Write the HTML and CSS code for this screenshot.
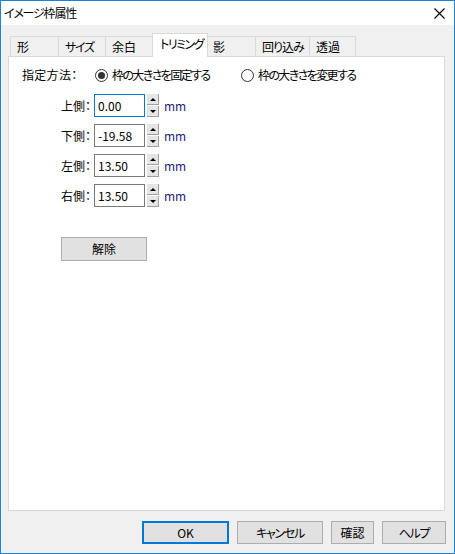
FILE: index.html
```html
<!doctype html>
<html lang="ja">
<head>
<meta charset="UTF-8">
<title>イメージ枠属性</title>
<link rel="stylesheet" href="styles.css">
</head>
<body>
<div class="window">
	<div class="titlebar">
		<span class="title">イメージ枠属性</span>
		<span class="close"><svg width="11" height="11" viewBox="0 0 11 11"><path d="M0.5 0.5L10.5 10.5M10.5 0.5L0.5 10.5" stroke="#000" stroke-width="1.1" fill="none"/></svg></span>
	</div>
	<div class="tabs">
		<div class="tab t-shape">形</div>
		<div class="tab t-size kana">サイズ</div>
		<div class="tab t-margin">余白</div>
		<div class="tab t-trim kana active">トリミング</div>
		<div class="tab t-shadow">影</div>
		<div class="tab t-wrap kana">回り込み</div>
		<div class="tab t-alpha">透過</div>
	</div>
	<div class="panel">
		<div class="method">
			<span class="method-label">指定方法：</span>
			<span class="radio first checked"><span class="dot"></span>枠の大きさを固定する</span>
			<span class="radio"><span class="dot"></span>枠の大きさを変更する</span>
		</div>
		<div class="field">
			<span class="field-label">上側：</span>
			<span class="input focus">0.00</span>
			<span class="spin"><span class="up"></span><span class="down"></span></span>
			<span class="unit">mm</span>
		</div>
		<div class="field">
			<span class="field-label">下側：</span>
			<span class="input">-19.58</span>
			<span class="spin"><span class="up"></span><span class="down"></span></span>
			<span class="unit">mm</span>
		</div>
		<div class="field">
			<span class="field-label">左側：</span>
			<span class="input">13.50</span>
			<span class="spin"><span class="up"></span><span class="down"></span></span>
			<span class="unit">mm</span>
		</div>
		<div class="field">
			<span class="field-label">右側：</span>
			<span class="input">13.50</span>
			<span class="spin"><span class="up"></span><span class="down"></span></span>
			<span class="unit">mm</span>
		</div>
		<div class="btn clear-btn">解除</div>
	</div>
	<div class="actions">
		<div class="btn b-ok default">OK</div>
		<div class="btn b-cancel kana">キャンセル</div>
		<div class="btn b-check">確認</div>
		<div class="btn b-help kana">ヘルプ</div>
	</div>
</div>
</body>
</html>
```
FILE: styles.css
```css
*{margin:0;padding:0;box-sizing:border-box;}
body{
	font-family:"Noto Sans CJK JP","Noto Sans",sans-serif;
	font-size:12px;
	line-height:16px;
	color:#000;
	background:#f0f0f0;
	font-feature-settings:"palt";
}
.kana{letter-spacing:-1.3px;}
.window{
	width:455px;
	height:554px;
	border:1px solid #1883d7;
	background:#f0f0f0;
}
.titlebar{
	display:flex;
	align-items:center;
	justify-content:space-between;
	height:24px;
	padding:0 9px 0 3px;
	background:#fff;
}
.title{letter-spacing:-1.2px;}
.close{display:flex;padding-top:1px;}
.close svg{display:block;}
/* tabs */
.tabs{
	display:flex;
	align-items:flex-end;
	height:31px;
	padding-left:9px;
}
.tab{
	position:relative;
	height:20px;
	padding:2px 0 0 6px;
	border:1px solid #d9d9d9;
	border-right:none;
	border-bottom:none;
	background:#f0f0f0;
	white-space:nowrap;
}
.t-shape{width:48px;}
.t-size{width:47px;}
.t-margin{width:47px;}
.t-trim{width:56px;letter-spacing:-1.5px;}
.t-shadow{width:47px;}
.t-wrap{width:54px;letter-spacing:-1px;}
.t-alpha{width:47px;border-right:1px solid #d9d9d9;}
.tab.active{
	height:24px;
	margin-bottom:-1px;
	padding:2px 0 0 7px;
	background:#fff;
	border-right:1px solid #d9d9d9;
	z-index:1;
}
.t-shadow{border-left:none;padding-left:5px;}
/* panel */
.panel{
	height:455px;
	margin:0 9px 0 7px;
	padding:0 0 0 1px;
	border:1px solid #d9d9d9;
	background:#fff;
}
.method{
	display:flex;
	align-items:center;
	height:20px;
	margin-top:8px;
	padding-left:12px;
}
.method-label{width:73px;letter-spacing:0.3px;font-feature-settings:"halt";}
.radio{display:flex;align-items:center;letter-spacing:-1.6px;white-space:nowrap;}
.radio.first{width:146px;}
.dot{
	display:flex;
	align-items:center;
	justify-content:center;
	width:13px;
	height:13px;
	margin-right:4px;
	border:1px solid #333;
	border-radius:50%;
}
.checked .dot::after{
	content:'';
	width:7px;
	height:7px;
	border-radius:50%;
	background:#333;
}
.field{
	display:flex;
	align-items:center;
	height:23px;
	margin-top:7px;
}
.method + .field{margin-top:9px;}
.field-label{
	width:81px;
	margin-right:3px;
	text-align:right;
	font-feature-settings:"halt";
}
.input{
	width:51px;
	height:23px;
	padding:3px 0 0 3px;
	border:1px solid #7a7a7a;
}
.input.focus{border-color:#0078d7;}
.spin{
	display:flex;
	flex-direction:column;
	justify-content:space-between;
	width:12px;
	height:23px;
	margin-left:2px;
}
.spin span{
	display:flex;
	align-items:center;
	justify-content:center;
	height:11px;
	background:#e5e5e5;
	border-right:1px solid #a0a0a0;
	border-bottom:1px solid #a0a0a0;
}
.spin .up::after{
	content:'';
	border-left:3px solid transparent;
	border-right:3px solid transparent;
	border-bottom:3px solid #000;
}
.spin .down::after{
	content:'';
	border-left:3px solid transparent;
	border-right:3px solid transparent;
	border-top:3px solid #000;
}
.unit{margin-left:5px;color:#1c1c78;}
/* buttons */
.btn{
	display:flex;
	align-items:center;
	justify-content:center;
	height:23px;
	border:1px solid #adadad;
	background:#e1e1e1;
}
.clear-btn{
	width:86px;
	height:24px;
	margin:30px 0 0 51px;
}
.actions{
	display:flex;
	justify-content:flex-end;
	gap:8px;
	margin-top:10px;
	padding-right:8px;
}
.b-ok{width:87px;}
.b-cancel{width:86px;}
.b-check{width:43px;}
.b-help{width:64px;}
.btn.default{border:2px solid #0078d7;}
```
